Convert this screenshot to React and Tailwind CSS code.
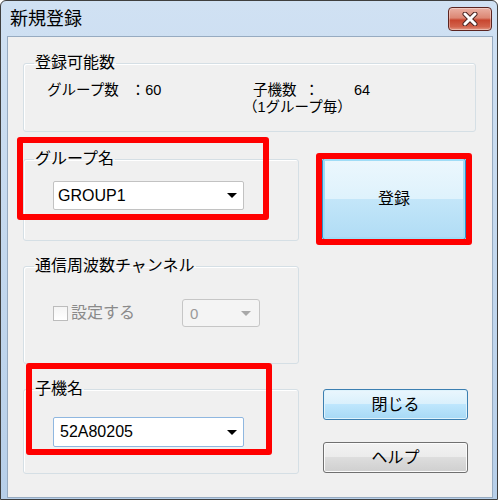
import React from 'react'

function Arrow({ color = '#000' }) {
  return (
    <svg width="10" height="5" viewBox="0 0 10 5">
      <polygon points="0,0 10,0 5,5" fill={color} />
    </svg>
  )
}

function Combo({ value, className = '', textClass = '' }) {
  return (
    <div className={`flex items-center justify-between bg-white border rounded-[2px] ${className}`}>
      <span className={`text-[16px] leading-none text-black ${textClass}`}>{value}</span>
      <div className="mr-[6px] flex items-center">
        <Arrow />
      </div>
    </div>
  )
}

function Group({ label, className = '', children }) {
  return (
    <fieldset className={`border border-[#d5dfe5] rounded-[3px] shadow-[inset_1px_1px_0_#ffffff] ${className}`}>
      <legend className="ml-[10px] px-[1px] text-[16px] leading-[20px] text-black">{label}</legend>
      {children}
    </fieldset>
  )
}

function CloseButton() {
  return (
    <div className="w-[44px] h-[24px] rounded-[4px] border border-[#5b2420] bg-[linear-gradient(to_bottom,#eab0a3_0%,#dc8774_45%,#c8462f_55%,#d2634c_85%,#e49a86_100%)] flex items-center justify-center shadow-[inset_0_0_0_1px_rgba(255,255,255,0.35)]">
      <svg width="18" height="14" viewBox="0 0 18 14">
        <path d="M4 2 L14 12 M14 2 L4 12" stroke="#4a2420" strokeWidth="5" strokeLinecap="round" />
        <path d="M4 2 L14 12 M14 2 L4 12" stroke="#ffffff" strokeWidth="3" strokeLinecap="round" />
      </svg>
    </div>
  )
}

export default function App() {
  return (
    <div className="relative w-[500px] h-[501px] bg-white font-['Liberation_Sans','Noto_Sans_CJK_JP',sans-serif]">
      <div className="w-[498px] h-[500px] border border-[#3f3f3f] rounded-t-[6px] bg-[linear-gradient(to_bottom,#d0e1f3,#b7cfe9)] flex flex-col">
        <div className="h-[35px] flex items-center justify-between pl-[9px] pr-[5px]">
          <span className="text-[18px] leading-none text-black">新規登録</span>
          <CloseButton />
        </div>

        <div className="ml-[6px] w-[486px] h-[462px] border border-[#97abc1] bg-[#f0f0f0] pt-[16px] pl-[15px]">
          <Group label="登録可能数" className="w-[453px] h-[79px]">
            <div className="flex pt-[9px] text-[14.5px] leading-[17px] text-black">
              <div className="ml-[23px] w-[206px]">
                グループ数<span className="ml-[12px]">：</span>60
              </div>
              <div>
                <div>
                  子機数<span className="ml-[8px]">：</span>
                  <span className="ml-[35px]">64</span>
                </div>
                <div className="-ml-[10px]">（1グループ毎）</div>
              </div>
            </div>
          </Group>

          <div className="flex mt-[17px]">
            <div className="w-[276px] flex flex-col">
              <Group label="グループ名" className="h-[92px]">
                <Combo
                  value="GROUP1"
                  className="ml-[29px] mt-[12px] w-[191px] h-[29px] border-[#c2c2c2]"
                  textClass="pl-[4px]"
                />
              </Group>

              <Group label="通信周波数チャンネル" className="mt-[15px] h-[108px]">
                <div className="flex items-center mt-[23px] ml-[29px]">
                  <div className="w-[15px] h-[15px] border border-[#bcbcbc] bg-[linear-gradient(to_bottom,#f4f4f4,#ffffff)]" />
                  <span className="ml-[3px] text-[16px] leading-none text-[#8a8a8a]">設定する</span>
                  <div className="ml-[47px] w-[78px] h-[28px] border border-[#c6c6c6] rounded-[3px] bg-[#f4f4f4] flex items-center justify-between">
                    <span className="pl-[7px] text-[15px] leading-none text-[#9a9a9a]">0</span>
                    <div className="mr-[8px] flex items-center">
                      <Arrow color="#a8a8a8" />
                    </div>
                  </div>
                </div>
              </Group>

              <Group label="子機名" className="mt-[15px] h-[95px]">
                <Combo
                  value="52A80205"
                  className="ml-[29px] mt-[18px] w-[191px] h-[30px] border-[#8fb7e0]"
                  textClass="pl-[6px] text-[15px]"
                />
              </Group>
            </div>

            <div className="ml-[23px] flex flex-col">
              <button className="mt-[9px] w-[144px] h-[82px] rounded-[3px] border border-[#2f8fc8] shadow-[inset_0_0_0_2px_#9fdcf6] bg-[linear-gradient(to_bottom,#ecf7fd_0%,#def2fc_50%,#c3e6f9_50%,#b0dcf5_100%)] text-[16px] text-black">
                登録
              </button>
              <button className="mt-[149px] ml-[1px] w-[145px] h-[31px] rounded-[3px] border border-[#3c7fb1] shadow-[inset_0_0_0_1px_#dff3fc] bg-[linear-gradient(to_bottom,#eaf6fd_0%,#d9f0fc_50%,#bee6fd_50%,#a7d9f5_100%)] text-[16px] leading-none text-black">
                閉じる
              </button>
              <button className="mt-[22px] ml-[1px] w-[145px] h-[31px] rounded-[3px] border border-[#707070] shadow-[inset_0_0_0_1px_#fbfbfb] bg-[linear-gradient(to_bottom,#f2f2f2_0%,#ebebeb_50%,#dddddd_50%,#cfcfcf_100%)] text-[16px] leading-none text-black">
                ヘルプ
              </button>
            </div>
          </div>
        </div>
      </div>

      <div className="absolute left-[17px] top-[137px] w-[252px] h-[83px] border-[6px] border-[#ff0000] rounded-[3px]" />
      <div className="absolute left-[316px] top-[153px] w-[156px] h-[92px] border-[6px] border-[#ff0000] rounded-[3px]" />
      <div className="absolute left-[26px] top-[363px] w-[246px] h-[92px] border-[6px] border-[#ff0000] rounded-[3px]" />
    </div>
  )
}
